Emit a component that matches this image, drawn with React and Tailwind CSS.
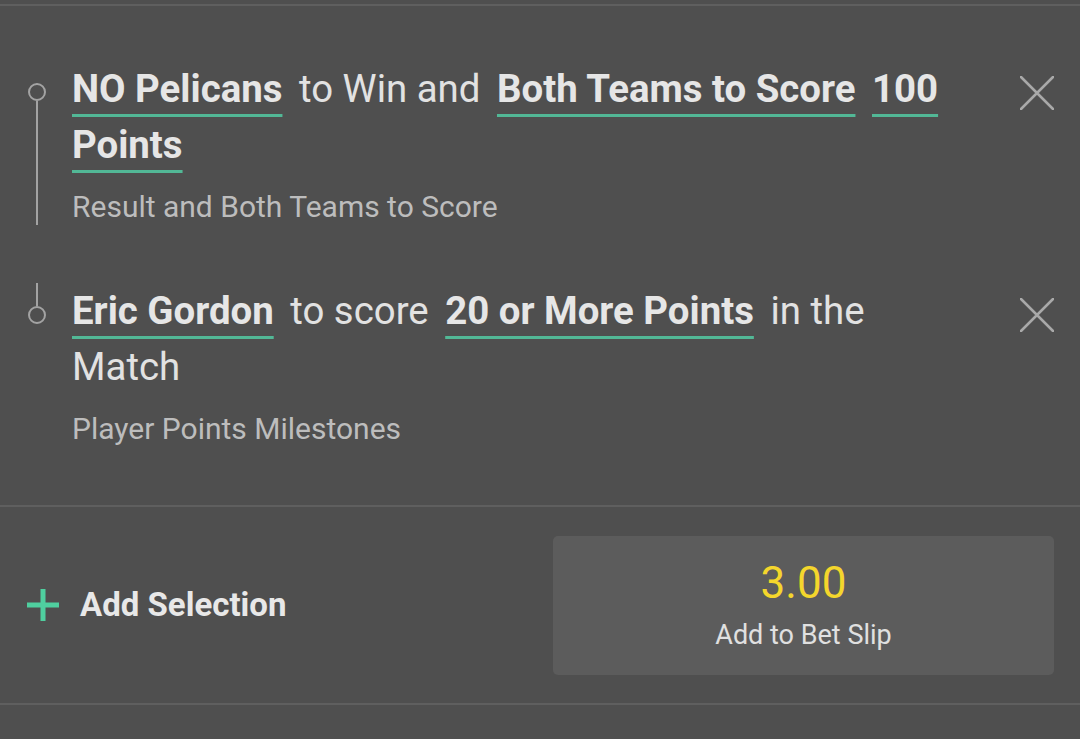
import React from "react";

const font = { fontFamily: "Roboto, 'Noto Sans', 'Liberation Sans', sans-serif" };

function Close() {
  return (
    <svg width="34" height="34" viewBox="0 0 34 34" className="shrink-0">
      <path d="M1 1 L33 33 M33 1 L1 33" stroke="#a9a9a9" strokeWidth="2.5" strokeLinecap="round" fill="none" />
    </svg>
  );
}

function Hi({ children }) {
  return (
    <span className="mr-[7px] font-bold text-[#e6e6e6] underline decoration-[#52b896] decoration-[3px] underline-offset-[12px]">
      {children}
    </span>
  );
}

function Lo({ children }) {
  return <span className="mr-[7px] text-[#e2e2e2]">{children}</span>;
}

export default function App() {
  return (
    <div className="w-[1080px] h-[739px] bg-[#4f4f4f] overflow-hidden" style={font}>
      <div className="h-[4px]" />
      <div className="border-t-2 border-[#5f5f5f]" />
      <div className="pt-[55px]">
        {/* item 1 */}
        <div className="flex pb-[58px]">
          <div className="w-[72px] shrink-0 pl-[28px]">
            <div className="w-[18px] h-full flex flex-col items-center">
              <div className="h-[22px]" />
              <div className="w-[18px] h-[18px] rounded-full border-2 border-[#a3a3a3] shrink-0" />
              <div className="w-[2px] flex-1 bg-[#a3a3a3]" />
            </div>
          </div>
          <div className="w-[898px]">
            <div className="text-[38.4px] leading-[56px]">
              <Hi>NO Pelicans</Hi> <Lo>to Win and</Lo> <Hi>Both Teams to Score</Hi> <Hi>100 Points</Hi>
            </div>
            <div className="mt-[16px] text-[30px] leading-[36px] text-[#bdbdbd]">Result and Both Teams to Score</div>
          </div>
          <div className="flex-1 flex justify-end pr-[26px] pt-[15px]">
            <Close />
          </div>
        </div>
        {/* item 2 */}
        <div className="flex pb-[58px]">
          <div className="w-[72px] shrink-0 pl-[28px]">
            <div className="w-[18px] flex flex-col items-center">
              <div className="w-[2px] h-[23px] bg-[#a3a3a3]" />
              <div className="w-[18px] h-[18px] rounded-full border-2 border-[#a3a3a3] shrink-0" />
            </div>
          </div>
          <div className="w-[898px]">
            <div className="text-[38.4px] leading-[56px]">
              <Hi>Eric Gordon</Hi> <Lo>to score</Lo> <Hi>20 or More Points</Hi> <Lo>in the Match</Lo>
            </div>
            <div className="mt-[16px] text-[30px] leading-[36px] text-[#bdbdbd]">Player Points Milestones</div>
          </div>
          <div className="flex-1 flex justify-end pr-[26px] pt-[15px]">
            <Close />
          </div>
        </div>
      </div>
      <div className="border-t-2 border-[#5f5f5f]" />
      <div className="h-[196px] flex items-center justify-between pl-[27px] pr-[26px]">
        <div className="flex items-center gap-[21px]">
          <svg width="32" height="32" viewBox="0 0 32 32">
            <path d="M16 0 V32 M0 16 H32" stroke="#4fcf9f" strokeWidth="5" fill="none" />
          </svg>
          <span className="text-[33px] font-bold text-[#e8e8e8]">Add Selection</span>
        </div>
        <button className="w-[501px] h-[139px] rounded-[5px] bg-[#5c5c5c] flex flex-col items-center justify-center">
          <span className="text-[44px] leading-[52px] text-[#f4d62c]">3.00</span>
          <span className="mt-[8px] text-[27px] leading-[36px] text-[#e0e0e0]">Add to Bet Slip</span>
        </button>
      </div>
      <div className="border-t-2 border-[#5f5f5f]" />
    </div>
  );
}
